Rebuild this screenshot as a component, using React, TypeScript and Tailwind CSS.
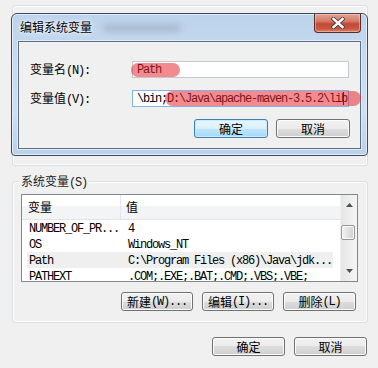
import React from "react";

const L = ({ children }: { children: React.ReactNode }) => (
  <span className="font-['Liberation_Mono',monospace] text-[12px] tracking-[-1.2px]">{children}</span>
);

const Btn = ({
  children,
  w,
  def,
}: {
  children: React.ReactNode;
  w: string;
  def?: boolean;
}) => (
  <div
    className={
      "h-[19px] rounded-[3px] border flex items-center justify-center text-[12px] leading-none text-black " +
      w +
      (def
        ? " border-[#3c7fb1] bg-[linear-gradient(#eaf6fd_0%,#d9f0fc_50%,#bee6fd_50%,#a7d9f5_100%)] shadow-[inset_0_0_0_1px_#c8ebfd]"
        : " border-[#707070] bg-[linear-gradient(#f2f2f2_0%,#ebebeb_50%,#dddddd_50%,#cfcfcf_100%)] shadow-[inset_0_0_0_1px_#fcfcfc]")
    }
  >
    {children}
  </div>
);

const rows: [string, string, boolean][] = [
  ["NUMBER_OF_PR...", "4", false],
  ["OS", "Windows_NT", false],
  ["Path", "C:\\Program Files (x86)\\Java\\jdk...", true],
  ["PATHEXT", ".COM;.EXE;.BAT;.CMD;.VBS;.VBE;", false],
];

export default function App() {
  return (
    <div className="relative w-[378px] h-[368px] overflow-hidden bg-[#f0f0f0] font-['Noto_Sans_CJK_SC','Liberation_Sans',sans-serif] text-[12px] text-black">
      {/* back dialog content */}
      <div className="pt-[5px]">
        <div className="ml-[12px] w-[356px] h-[161px] rounded-[3px] border border-[#d5dfe5] shadow-[inset_0_0_0_1px_#fff]" />
        <div className="relative ml-[12px] mt-[15px] w-[356px] h-[142px] rounded-[3px] border border-[#d5dfe5] shadow-[inset_0_0_0_1px_#fff] pl-[8px] pt-[12px] pr-[11px]">
          <span className="absolute left-[7px] -top-[10px] bg-[#f0f0f0] px-[1px] leading-[18px] text-[12px] text-[#1e1e1e]">
            系统变量<L>(S)</L>
          </span>
          {/* list view */}
          <div className="w-[337px] h-[88px] border border-[#828790] bg-white flex overflow-hidden">
            <div className="flex-1 flex flex-col overflow-hidden">
              <div className="h-[25px] shrink-0 flex border-b border-[#e2e3e5] bg-[linear-gradient(#ffffff_0%,#ffffff_45%,#f3f4f6_45%,#f3f4f6_100%)]">
                <div className="w-[99px] pl-[6px] border-r border-[#e3e8ee] flex items-center text-[12px]">变量</div>
                <div className="flex-1 pl-[5px] flex items-center text-[12px]">值</div>
              </div>
              {rows.map(([n, v, sel]) => (
                <div key={n} className="h-[16px] shrink-0 pl-[5px]">
                  <div className={"h-[16px] w-[306px] flex items-center " + (sel ? "bg-[#efefef]" : "")}>
                    <div className="w-[101px] pl-[2px] leading-[16px] whitespace-nowrap">
                      <L>{n}</L>
                    </div>
                    <div className="leading-[16px] whitespace-nowrap">
                      <L>{v}</L>
                    </div>
                  </div>
                </div>
              ))}
            </div>
            {/* scrollbar */}
            <div className="w-[17px] shrink-0 bg-[linear-gradient(90deg,#e6e6e6,#f5f5f5)] border-l border-[#f0f0f0] flex flex-col items-center">
              <div className="h-[17px] w-full flex items-center justify-center pt-[2px]">
                <svg width="7" height="4" viewBox="0 0 7 4"><path d="M0 4 L3.5 0 L7 4 Z" fill="#505050" /></svg>
              </div>
              <div className="mt-[13px] w-[14px] h-[15px] rounded-[2px] border border-[#979797] bg-[linear-gradient(90deg,#f4f4f4,#e2e2e2_50%,#cfcfcf)] shadow-[inset_0_0_0_1px_#f8f8f8] self-start ml-[0px]" />
              <div className="flex-1" />
              <div className="h-[17px] w-full flex items-center justify-center pb-[4px]">
                <svg width="7" height="4" viewBox="0 0 7 4"><path d="M0 0 L3.5 4 L7 0 Z" fill="#505050" /></svg>
              </div>
            </div>
          </div>
          <div className="mt-[10px] flex justify-end gap-[9px] pr-[0px]">
            <Btn w="w-[72px]">新建<L>(W)...</L></Btn>
            <Btn w="w-[72px]">编辑<L>(I)...</L></Btn>
            <Btn w="w-[73px]">删除<L>(L)</L></Btn>
          </div>
        </div>
        <div className="mt-[14px] flex justify-end gap-[9px] pr-[11px]">
          <Btn w="w-[73px]">确定</Btn>
          <Btn w="w-[73px]">取消</Btn>
        </div>
      </div>

      {/* edit dialog window (overlay) */}
      <div className="absolute left-[11px] top-[13px] w-[357px] h-[143px] rounded-t-[6px] rounded-b-[4px] border border-[#3b4b5c] bg-[linear-gradient(#bcd3ec_0%,#c6daef_30%,#cddff2_70%,#b9d1ea_100%)] shadow-[inset_0_0_0_1px_#e4eef8] flex flex-col">
        <div className="h-[27px] shrink-0 flex items-start relative">
          <div className="pl-[8px] pt-[5px] text-[12px] leading-[16px] [text-shadow:0_0_6px_#fff,0_0_3px_#fff]">编辑系统变量</div>
          <div className="ml-[11px] mt-[10px] w-[78px] h-[8px] rounded-full bg-[#9aa8b8] blur-[3px] opacity-60" />
          <div className="absolute right-[6px] top-0 w-[47px] h-[19px] rounded-b-[4px] border border-t-0 border-[#5a2a24] bg-[linear-gradient(#e7a493_0%,#d47a68_40%,#c24a35_55%,#c9563f_80%,#db8068_100%)] shadow-[inset_0_0_0_1px_rgba(255,210,200,0.5)] flex items-center justify-center">
            <svg width="14" height="12" viewBox="0 0 14 12">
              <path d="M2.5 2 L11.5 10 M11.5 2 L2.5 10" stroke="#4a3a3a" strokeWidth="4.2" strokeLinecap="square" />
              <path d="M2.5 2 L11.5 10 M11.5 2 L2.5 10" stroke="#ffffff" strokeWidth="2.4" strokeLinecap="square" />
            </svg>
          </div>
        </div>
        <div className="mx-[6px] h-[108px] border border-[#5d6f82] bg-[#f0f0f0] shadow-[0_0_0_1px_#dfeaf6] pl-[11px] pt-[19px]">
          <div className="flex items-center h-[17px]">
            <div className="w-[102px] text-[12px] leading-[16px]">
              变量名<L>(N):</L>
            </div>
            <div className="relative w-[217px] h-[17px] border border-[#c5c9d1] bg-white pl-[4px] flex items-center">
              <L>Path</L>
              <span className="absolute left-[-2px] top-[1px] w-[49px] h-[14px] rounded-full bg-[rgba(230,40,48,0.54)]" />
            </div>
          </div>
          <div className="flex items-center h-[17px] mt-[12px]">
            <div className="w-[102px] text-[12px] leading-[16px]">
              变量值<L>(V):</L>
            </div>
            <div className="relative w-[217px] h-[17px] border border-[#7eb4ea] bg-white pl-[4px] flex items-center whitespace-nowrap">
              <L>\bin;D:\Java\apache-maven-3.5.2\lib</L>
              <span className="w-[1px] h-[13px] bg-black -ml-[4px]" />
              <span className="absolute left-[32px] top-[0px] w-[196px] h-[15px] rounded-full bg-[rgba(230,40,48,0.54)]" />
            </div>
          </div>
          <div className="flex gap-[8px] pl-[164px] mt-[12px]">
            <Btn w="w-[74px]" def>
              确定
            </Btn>
            <Btn w="w-[74px]">取消</Btn>
          </div>
        </div>
      </div>
    </div>
  );
}
